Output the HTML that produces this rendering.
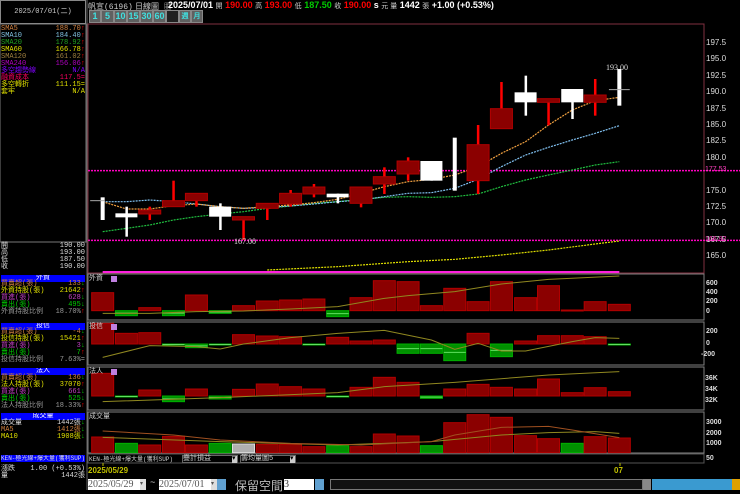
<!DOCTYPE html>
<html><head><meta charset="utf-8">
<style>
*{margin:0;padding:0;box-sizing:border-box}
body{width:740px;height:490px;background:#000;overflow:hidden;position:relative;font-family:"Liberation Mono","WenQuanYi Zen Hei",monospace;color:#ddd}
.a{position:absolute;white-space:nowrap}
.s{font-size:7px;line-height:7px}
.s div{height:7px;white-space:nowrap}
.r{text-align:right}
.hd{position:absolute;left:1px;width:84px;height:7px;background:#0000ff;color:#fff;font-size:7px;line-height:7px;text-align:center;overflow:hidden;white-space:nowrap}
.btn{position:absolute;top:10px;height:13px;background:#606060;border:1px solid #888;color:#40e0e0;font:bold 9px "Liberation Sans",sans-serif;text-align:center;line-height:11px}
</style></head><body>
<svg id="g" class="a" style="left:0;top:0" width="740" height="490"></svg>

<div class="a" style="left:0;top:0;width:86px;height:24px;border:1px solid #888;color:#ccc;font-size:7px;line-height:22px;text-align:center">2025/07/01(二)</div>
<div class="a s" style="left:1px;top:26px;width:84px">
<div style="color:#d08040">SMA5<span style="float:right">188.70<b style="color:#f00">↑</b></span></div>
<div style="color:#80c0e0">SMA10<span style="float:right">184.40<b style="color:#f00">↑</b></span></div>
<div style="color:#20a020">SMA20<span style="float:right">178.92<b style="color:#f00">↑</b></span></div>
<div style="color:#e0e000">SMA60<span style="float:right">166.78<b style="color:#f00">↑</b></span></div>
<div style="color:#a08040">SMA120<span style="float:right">161.02<b style="color:#f00">↑</b></span></div>
<div style="color:#b000c0">SMA240<span style="float:right">156.06<b style="color:#f00">↑</b></span></div>
<div style="color:#8000ff">多空趨勢線<span style="float:right">N/A</span></div>
<div style="color:#ff0060">融資成本<span style="float:right">117.5=</span></div>
<div style="color:#e0e000">多空轉折<span style="float:right">111.15=</span></div>
<div style="color:#e0e000">套牢<span style="float:right">N/A</span></div>
</div>
<div class="a s" style="left:1px;top:243px;width:84px;color:#ddd">
<div>開<span style="float:right">190.00</span></div>
<div>高<span style="float:right">193.00</span></div>
<div>低<span style="float:right">187.50</span></div>
<div>收<span style="float:right">190.00</span></div>
</div>
<div class="hd" style="top:275px">外資</div>
<div class="a s" style="left:1px;top:281px;width:84px">
<div style="color:#d08040">買賣超(張)<span style="float:right">133<b style="color:#0c0">↓</b></span></div>
<div style="color:#e0e000">外資持股(張)<span style="float:right">21642<b style="color:#f00">↑</b></span></div>
<div style="color:#c040c0">買進(張)<span style="float:right">628<b style="color:#0c0">↓</b></span></div>
<div style="color:#0c0">賣出(張)<span style="float:right">495<b style="color:#0c0">↓</b></span></div>
<div style="color:#999">外資持股比例<span style="float:right">18.70%<b style="color:#f00">↑</b></span></div>
</div>
<div class="hd" style="top:323px">投信</div>
<div class="a s" style="left:1px;top:329px;width:84px">
<div style="color:#d08040">買賣超(張)<span style="float:right">-4<b style="color:#0c0">↓</b></span></div>
<div style="color:#e0e000">投信持股(張)<span style="float:right">15421<b style="color:#f00">↑</b></span></div>
<div style="color:#c040c0">買進(張)<span style="float:right">3<b style="color:#0c0">↓</b></span></div>
<div style="color:#0c0">賣出(張)<span style="float:right">7<b style="color:#f00">↑</b></span></div>
<div style="color:#999">投信持股比例<span style="float:right">7.63%=</span></div>
</div>
<div class="hd" style="top:368px">法人</div>
<div class="a s" style="left:1px;top:375px;width:84px">
<div style="color:#d08040">買賣超(張)<span style="float:right">136<b style="color:#0c0">↓</b></span></div>
<div style="color:#e0e000">法人持股(張)<span style="float:right">37070<b style="color:#f00">↑</b></span></div>
<div style="color:#c040c0">買進(張)<span style="float:right">661<b style="color:#0c0">↓</b></span></div>
<div style="color:#0c0">賣出(張)<span style="float:right">525<b style="color:#0c0">↓</b></span></div>
<div style="color:#999">法人持股比例<span style="float:right">18.33%<b style="color:#f00">↑</b></span></div>
</div>
<div class="hd" style="top:413px">成交量</div>
<div class="a s" style="left:1px;top:420px;width:84px">
<div style="color:#ddd">成交量<span style="float:right">1442張<b style="color:#0c0">↓</b></span></div>
<div style="color:#d08040">MA5<span style="float:right">1412張<b style="color:#0c0">↓</b></span></div>
<div style="color:#e0e000">MA10<span style="float:right">1908張<b style="color:#0c0">↓</b></span></div>
</div>
<div class="hd" style="top:455px;text-align:left;color:#ddd;font-size:6px">KEN-極光線+爆大量(獲利SUP)</div>
<div class="a s" style="left:1px;top:466px;width:84px;color:#ddd">
<div>漲跌<span style="float:right">1.00 (+0.53%)</span></div>
<div>量<span style="float:right">1442張</span></div>
</div>

<div class="a" style="left:88px;top:1px;font-size:8px;color:#ccc">帆宣(6196)</div>
<div class="a" style="left:135px;top:1px;font-size:8px;color:#ccc">日線圖 ▦</div>
<div class="a" style="left:168px;top:0px;font:bold 9px 'Liberation Sans',sans-serif;color:#fff">2025/07/01 <span style="color:#ccc;font-weight:normal;font-size:7px">開</span> <span style="color:#f00">190.00</span> <span style="color:#ccc;font-weight:normal;font-size:7px">高</span> <span style="color:#f00">193.00</span> <span style="color:#ccc;font-weight:normal;font-size:7px">低</span> <span style="color:#0c0">187.50</span> <span style="color:#ccc;font-weight:normal;font-size:7px">收</span> <span style="color:#f00">190.00</span> s <span style="color:#ccc;font-weight:normal;font-size:7px">元 量</span> 1442 <span style="color:#ccc;font-weight:normal;font-size:7px">張</span> +1.00 (+0.53%)</div>
<div class="btn" style="left:89px;width:12px">1</div>
<div class="btn" style="left:101px;width:13px">5</div>
<div class="btn" style="left:114px;width:13px">10</div>
<div class="btn" style="left:127px;width:13px">15</div>
<div class="btn" style="left:140px;width:13px">30</div>
<div class="btn" style="left:153px;width:13px">60</div>
<div class="btn" style="left:166px;width:13px;background:#202020"></div>
<div class="btn" style="left:179px;width:12px;font-size:7px">週</div>
<div class="btn" style="left:191px;width:12px;font-size:7px">月</div>

<div class="a" style="left:706px;top:35px;font:8px 'Liberation Sans',sans-serif;color:#ddd;line-height:16.4px">197.5<br>195.0<br>192.5<br>190.0<br>187.5<br>185.0<br>182.5<br>180.0<br><br>175.0<br>172.5<br>170.0<br>167.5<br>165.0</div>
<div class="a" style="left:705px;top:166px;font:7px 'Liberation Sans',sans-serif;color:#ff40c0">177.53</div>
<div class="a" style="left:705px;top:236px;font:7px 'Liberation Sans',sans-serif;color:#ff40c0">166.92</div>
<div class="a" style="left:606px;top:63px;font:8px 'Liberation Serif',serif;color:#ddd">193.00</div>
<div class="a" style="left:234px;top:237px;font:8px 'Liberation Serif',serif;color:#ddd">167.00</div>
<div class="a" style="left:706px;top:279px;font:bold 7px 'Liberation Sans',sans-serif;color:#ddd;line-height:9.2px">600<br>400<br>200<br>0</div>
<div class="a" style="left:706px;top:328px;font:bold 7px 'Liberation Sans',sans-serif;color:#ddd">200</div>
<div class="a" style="left:706px;top:340px;font:bold 7px 'Liberation Sans',sans-serif;color:#ddd">0</div>
<div class="a" style="left:701px;top:351px;font:bold 7px 'Liberation Sans',sans-serif;color:#ddd">-200</div>
<div class="a" style="left:705px;top:373px;font:bold 7px 'Liberation Sans',sans-serif;color:#ddd;line-height:11px">36K<br>34K<br>32K</div>
<div class="a" style="left:706px;top:418px;font:bold 7px 'Liberation Sans',sans-serif;color:#ddd;line-height:10.5px">3000<br>2000<br>1000</div>
<div class="a" style="left:706px;top:455px;font:bold 7px 'Liberation Sans',sans-serif;color:#ddd">50</div>
<div class="a s" style="left:89px;top:276px;color:#ccc">外資</div>
<div class="a s" style="left:89px;top:324px;color:#ccc">投信</div>
<div class="a s" style="left:89px;top:369px;color:#ccc">法人</div>
<div class="a s" style="left:89px;top:414px;color:#ccc">成交量</div>
<div class="a" style="left:89px;top:456px;color:#ccc;font-size:6px;line-height:7px">KEN-極光線+爆大量(獲利SUP)</div>
<div class="a s" style="left:182px;top:455px;width:56px;height:8px;border:1px solid #666;color:#ccc">疊計損益<span style="float:right;background:#ccc;color:#000;width:5px">▾</span></div>
<div class="a s" style="left:240px;top:455px;width:56px;height:8px;border:1px solid #666;color:#ccc">籌均量圖5<span style="float:right;background:#ccc;color:#000;width:5px">▾</span></div>
<div class="a" style="left:88px;top:466px;font:bold 8px 'Liberation Sans',sans-serif;color:#c0c000">2025/05/29</div>
<div class="a" style="left:614px;top:466px;font:bold 8px 'Liberation Sans',sans-serif;color:#c0c000">07</div>

<div class="a" style="left:88px;top:479px;width:58px;height:11px;background:#fff;color:#555;font:10px 'Liberation Serif',serif;line-height:11px">2025/05/29<span style="position:absolute;right:0;top:0;width:6px;height:11px;background:#ddd;font-size:6px">▾</span></div>
<div class="a" style="left:150px;top:478px;color:#ccc;font-size:9px">~</div>
<div class="a" style="left:159px;top:479px;width:58px;height:11px;background:#fff;color:#555;font:10px 'Liberation Serif',serif;line-height:11px">2025/07/01<span style="position:absolute;right:0;top:0;width:6px;height:11px;background:#ddd;font-size:6px">▾</span></div>
<div class="a" style="left:217px;top:479px;width:9px;height:11px;background:#60a0d0"></div>
<div class="a" style="left:235px;top:477px;color:#bbb;font:12px 'WenQuanYi Zen Hei',sans-serif">保留空間</div>
<div class="a" style="left:284px;top:479px;width:30px;height:11px;background:#fff;color:#333;font:10px 'Liberation Serif',serif;line-height:11px">3</div>
<div class="a" style="left:315px;top:479px;width:9px;height:11px;background:#60a0d0"></div>
<div class="a" style="left:330px;top:479px;width:313px;height:11px;background:#111;border:1px solid #777"></div>
<div class="a" style="left:643px;top:479px;width:8px;height:11px;background:#888"></div>
<div class="a" style="left:652px;top:479px;width:88px;height:11px;background:#3a9ad0"></div>
<div class="a" style="left:732px;top:479px;width:8px;height:11px;background:#e0a000"></div>
<script>
var g=document.getElementById('g'),h='';
function X(z){return 86+z/2.4}
function Y5(z){return 60+z/3}
function Y4(z){return 265+z/3}
function R(x,y,w,hh,f,s){h+='<rect x="'+x+'" y="'+y+'" width="'+w+'" height="'+Math.max(hh,1)+'" fill="'+f+'"'+(s?' stroke="'+s+'" stroke-width="1"':'')+'/>'}
function L(x1,y1,x2,y2,c,w,d){h+='<line x1="'+x1+'" y1="'+y1+'" x2="'+x2+'" y2="'+y2+'" stroke="'+c+'" stroke-width="'+(w||1)+'"'+(d?' stroke-dasharray="'+d+'"':'')+'/>'}
function P(pts,c,fy,d,w){h+='<polyline fill="none" stroke="'+c+'" stroke-width="'+(w||1)+'"'+(d?' stroke-dasharray="'+d+'"':'')+' points="'+pts.map(function(p){return X(p[0])+','+fy(p[1])}).join(' ')+'"/>'}
var cx=[40,97,153,210,265,322,378,435,491,547,604,660,716,773,829,885,941,997,1055,1110,1167,1222,1280];
R(0,24,86,218,'none','#777');
R(88,24,616,249,'none','#803040');
L(87,0,87,490,'#666');
[[274,320],[322,365],[367,410],[412,453]].forEach(function(p){R(88,p[0],616,p[1]-p[0],'none','#808080')});
R(88,454,616,9,'none','#555');
L(88,Y5(332),740,Y5(332),'#ff00c0',1.5,'2 1');
L(88,Y5(541),740,Y5(541),'#ff00c0',1.5,'2 1');
P([[435,630],[604,620],[773,605],[885,598],[997,585],[1110,570],[1222,552],[1280,543]],'#e0e000',Y5,'2 1',1.2);
P([[40,515],[97,505],[153,495],[210,480],[265,470],[322,462],[378,455],[435,445],[491,438],[547,430],[604,425],[660,418],[716,412],[773,410],[829,412],[885,410],[941,402],[997,380],[1055,360],[1110,345],[1167,330],[1222,315],[1280,305]],'#20c040',Y5,'2 1',1.2);
P([[40,425],[97,425],[153,420],[210,425],[265,432],[322,440],[378,445],[435,442],[491,438],[547,432],[604,425],[660,420],[716,410],[773,400],[829,398],[885,385],[941,358],[997,320],[1055,285],[1110,262],[1167,240],[1222,220],[1280,197]],'#80c0f0',Y5,'2 1',1.2);
P([[40,425],[97,447],[153,447],[210,437],[265,432],[322,440],[378,445],[435,440],[491,435],[547,428],[604,418],[660,400],[716,380],[773,365],[829,358],[885,345],[941,320],[997,280],[1055,245],[1110,195],[1167,150],[1222,122],[1280,112]],'#f0a040',Y5,'2 1',1.2);
var C=[['wn',412,480,412,480],['w',440,530,460,472],['r',440,480,450,462],['r',362,440,422,440],['r',400,440,400,422],['w',430,510,440,470],['r',470,540,470,480],['r',430,480,430,445],['r',390,440,400,432],['r',372,412,381,402],['w',401,430,401,412],['r',381,442,381,430],['r',322,402,350,372],['r',292,362,303,342],['w',303,362,303,362],['wn',233,392,233,392],['r',195,402,254,362],['r',66,206,146,206],['w',47,167,97,127],['r',116,196,116,127],['w',87,177,87,127],['r',57,167,105,127],['wn',27,137,27,137]];
C.forEach(function(c,i){var x=X(cx[i]);
 if(c[0]=='wn'){R(x-2,Y5(c[1]),4,(c[2]-c[1])/3,'#fff');return}
 if(c[0]=='w'){R(x-1,Y5(c[1]),2.5,(c[2]-c[1])/3,'#fff');R(x-11,Y5(c[3]),22,(c[4]-c[3])/3,'#fff');}
 else{R(x-1.2,Y5(c[1]),2.5,(c[2]-c[1])/3,'#ff0000');R(x-11,Y5(c[3]),22,(c[4]-c[3])/3,'#8b0000','#b00000');}
});
L(X(1255),Y5(89),X(1305),Y5(89),'#aaa');L(X(10),Y5(422),X(45),Y5(422),'#aaa');
L(X(40),272,X(1280),272,'#ff20e0',2);
function bars(vals,z0,fy){vals.forEach(function(v,i){var x=X(cx[i])-11;var y0=fy(z0);
 if(v[0]=='g'){var y1=fy(v[1]);R(x,Math.min(y0,y1),22,Math.abs(y1-y0),'#009000','#00b000');L(x,(y0+y1)/2,x+22,(y0+y1)/2,'#60e060');}
 else{var y1=fy(v);R(x,y1,22,y0-y1,'#8b0000','#b00000');}});}
bars([83,['g',152],128,['g',152],90,['g',145],122,108,105,102,['g',155],98,47,50,122,70,110,50,98,62,135,110,118],137,Y4);
P([[40,145],[153,145],[265,140],[378,138],[491,132],[604,125],[716,100],[773,92],[885,80],[997,57],[1110,43],[1280,33]],'#908820',Y4);
bars([175,205,203,['g',240],['g',248],['g',240],209,213,215,['g',240],217,228,225,['g',265],['g',265],['g',287],205,['g',275],228,212,212,215,['g',240]],237,Y4);
P([[40,277],[153,242],[265,245],[322,252],[378,237],[491,218],[604,205],[716,196],[829,225],[885,253],[941,235],[997,258],[1055,258],[1167,230],[1222,218],[1280,220]],'#908820',Y4);
bars([325,['g',396],375,['g',410],372,['g',402],373,357,365,372,['g',396],367,337,352,['g',400],372,358,367,372,342,383,368,380],393,Y4);
P([[40,410],[322,398],[604,383],[716,365],[885,352],[1110,330],[1280,320]],'#908820',Y4);
var V=[516,['g',535],540,514,540,['g',535],['y',537],538,538,545,['g',542],545,507,513,['g',542],473,449,457,512,521,['g',535],515,519];
V.forEach(function(v,i){var x=X(cx[i])-11,y0=Y4(563);var y1=Y4(typeof v=='number'?v:v[1]);
 var f=typeof v=='number'?['#8b0000','#b00000']:(v[0]=='g'?['#009000','#00b000']:['#b0b0b0','#ddd']);R(x,y1,22,y0-y1,f[0],f[1]);});
P([[40,517],[322,530],[604,540],[829,530],[997,510],[1110,503],[1222,500],[1280,505]],'#908820',Y4);
P([[40,498],[210,510],[322,525],[491,535],[660,540],[829,530],[885,510],[997,487],[1110,484],[1167,495],[1280,518]],'#a05020',Y4);
[276,324,369].forEach(function(y){R(111,y,6,6,'#c080e0')});
L(103,463,103,466,'#c0c000');L(620,463,620,466,'#c0c000');
g.innerHTML=h;
</script>
</body></html>
